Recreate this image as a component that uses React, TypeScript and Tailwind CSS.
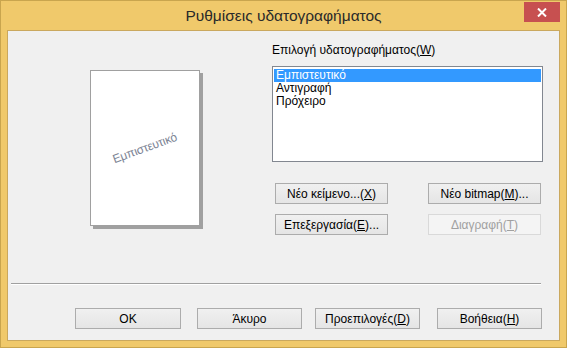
import React from "react";

const font = { fontFamily: '"Liberation Sans", Arial, sans-serif' };

function U({ children }: { children: React.ReactNode }) {
  return <span className="underline underline-offset-[1px]">{children}</span>;
}

function Btn({
  children,
  className = "",
  disabled = false,
}: {
  children: React.ReactNode;
  className?: string;
  disabled?: boolean;
}) {
  return (
    <button
      disabled={disabled}
      className={
        "h-[21px] flex items-center justify-center text-[12px] leading-none " +
        (disabled
          ? "border border-[#d9d9d9] bg-[#f4f4f4] text-[#a0a0a0] "
          : "border border-[#acacac] bg-gradient-to-b from-[#f0f0f0] to-[#e5e5e5] text-black ") +
        className
      }
    >
      {children}
    </button>
  );
}

export default function App() {
  const items = ["Εμπιστευτικό", "Αντιγραφή", "Πρόχειρο"];

  return (
    <div
      style={font}
      className="w-[567px] h-[348px] bg-[#f0c96b] border border-[#c9a54e] pt-[29px] px-[6px] pb-[6px] relative select-none"
    >
      {/* title bar */}
      <div className="absolute left-0 right-0 top-0 h-[30px] flex items-center justify-center text-[15.5px] text-[#2a2a2a]">
        Ρυθμίσεις υδατογραφήματος
      </div>
      <div className="absolute top-[1px] left-[523px] w-[36px] h-[20px] bg-[#c75050] flex items-center justify-center">
        <svg width="10" height="9" viewBox="0 0 10 9">
          <path d="M1 0.5 L9 8.5 M9 0.5 L1 8.5" stroke="white" strokeWidth="2" />
        </svg>
      </div>

      {/* client */}
      <div className="w-full h-full border border-[#caa85e] bg-[#f0f0f0] flex flex-col">
        <div className="h-[252px] flex">
          <div className="w-[264px] pl-[82px] pt-[39px]">
            <div className="w-[110px] h-[156px] bg-white border border-[#a0a0a0] shadow-[3px_3px_0_#a0a0a0] flex items-center justify-center">
              <span className="-rotate-[20deg] text-[12px] text-[#7c8494] tracking-[-0.2px]">
                Εμπιστευτικό
              </span>
            </div>
          </div>
          <div className="flex flex-col pt-[12px]">
            <div className="h-[15px] leading-[15px] text-[12px] text-black">
              Επιλογή υδατογραφήματος(<U>W</U>)
            </div>
            <div className="mt-[8px] w-[271px] h-[96px] border border-[#828790] bg-white p-[1px] pt-[2px]">
              {items.map((t, i) => (
                <div
                  key={t}
                  className={
                    "h-[13px] leading-[13px] text-[12px] pl-[2px] " +
                    (i === 0 ? "bg-[#3399ff] text-white" : "text-black")
                  }
                >
                  {t}
                </div>
              ))}
            </div>
            <div className="mt-[21px] ml-[3px] grid grid-cols-[113px_113px] gap-x-[40px] gap-y-[10px]">
              <Btn>
                Νέο κείμενο...(<U>X</U>)
              </Btn>
              <Btn>
                Νέο bitmap(<U>M</U>)...
              </Btn>
              <Btn>
                Επεξεργασία(<U>E</U>)...
              </Btn>
              <Btn disabled>
                Διαγραφή(<U>T</U>)
              </Btn>
            </div>
          </div>
        </div>

        <div className="ml-[3px] w-[530px] border-t border-[#a0a0a0] border-b border-b-white" />

        <div className="mt-[23px] ml-[67px] flex">
          <Btn className="w-[106px]">OK</Btn>
          <Btn className="w-[105px] ml-[16px]">Άκυρο</Btn>
          <Btn className="w-[105px] ml-[13px]">
            Προεπιλογές(<U>D</U>)
          </Btn>
          <Btn className="w-[105px] ml-[17px]">
            Βοήθεια(<U>H</U>)
          </Btn>
        </div>
      </div>
    </div>
  );
}
